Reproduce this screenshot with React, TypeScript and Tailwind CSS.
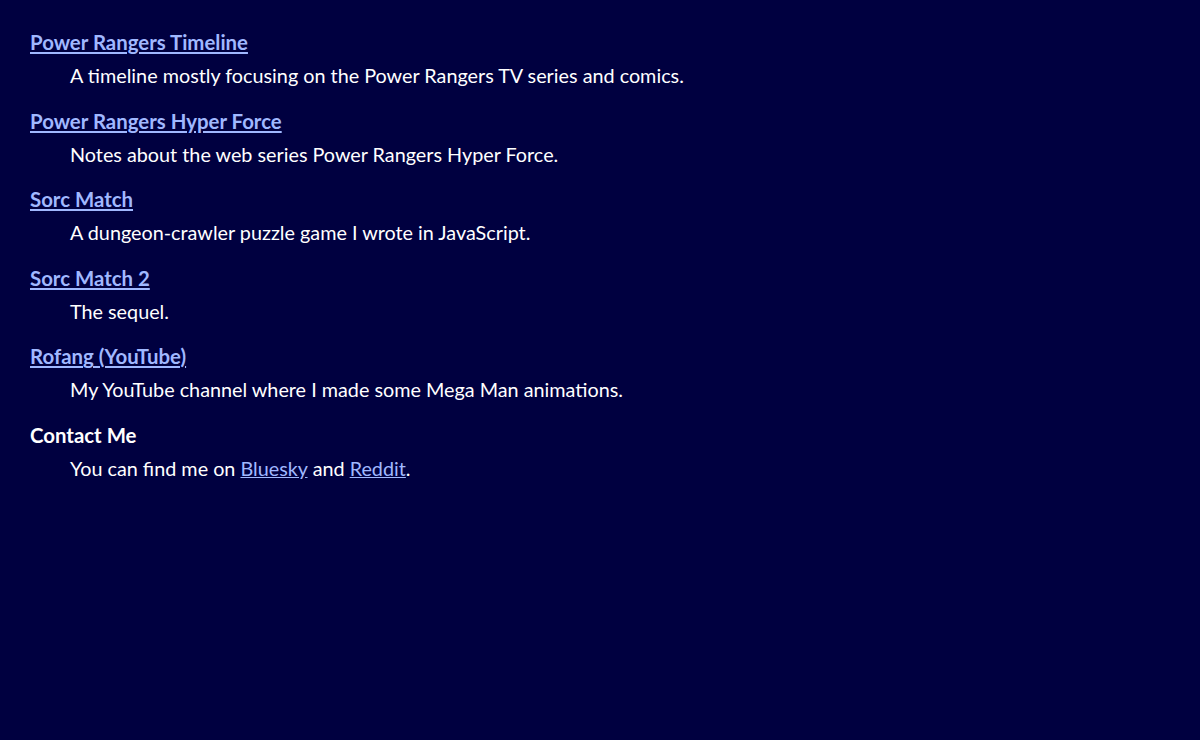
export default function App() {
  const items = [
    {
      title: "Power Rangers Timeline",
      desc: "A timeline mostly focusing on the Power Rangers TV series and comics.",
    },
    {
      title: "Power Rangers Hyper Force",
      desc: "Notes about the web series Power Rangers Hyper Force.",
    },
    {
      title: "Sorc Match",
      desc: "A dungeon-crawler puzzle game I wrote in JavaScript.",
    },
    { title: "Sorc Match 2", desc: "The sequel." },
    {
      title: "Rofang (YouTube)",
      desc: "My YouTube channel where I made some Mega Man animations.",
    },
  ];

  return (
    <div className="min-h-[740px] bg-[#000040] px-[30px] pt-[29px] text-white font-['Lato',sans-serif] text-[19.8px] leading-[26px]">
      <dl>
        {items.map((item) => (
          <div key={item.title} className="mb-[19.6px]">
            <dt className="font-bold text-[20.4px]">
              <a href="#" className="text-[#a0b8ff] underline">
                {item.title}
              </a>
            </dt>
            <dd className="ml-10 mt-[7px]">{item.desc}</dd>
          </div>
        ))}
        <div>
          <dt className="font-bold text-[20.4px]">Contact Me</dt>
          <dd className="ml-10 mt-[7px]">
            You can find me on{" "}
            <a href="#" className="text-[#a0b8ff] underline">
              Bluesky
            </a>{" "}
            and{" "}
            <a href="#" className="text-[#a0b8ff] underline">
              Reddit
            </a>
            .
          </dd>
        </div>
      </dl>
    </div>
  );
}
